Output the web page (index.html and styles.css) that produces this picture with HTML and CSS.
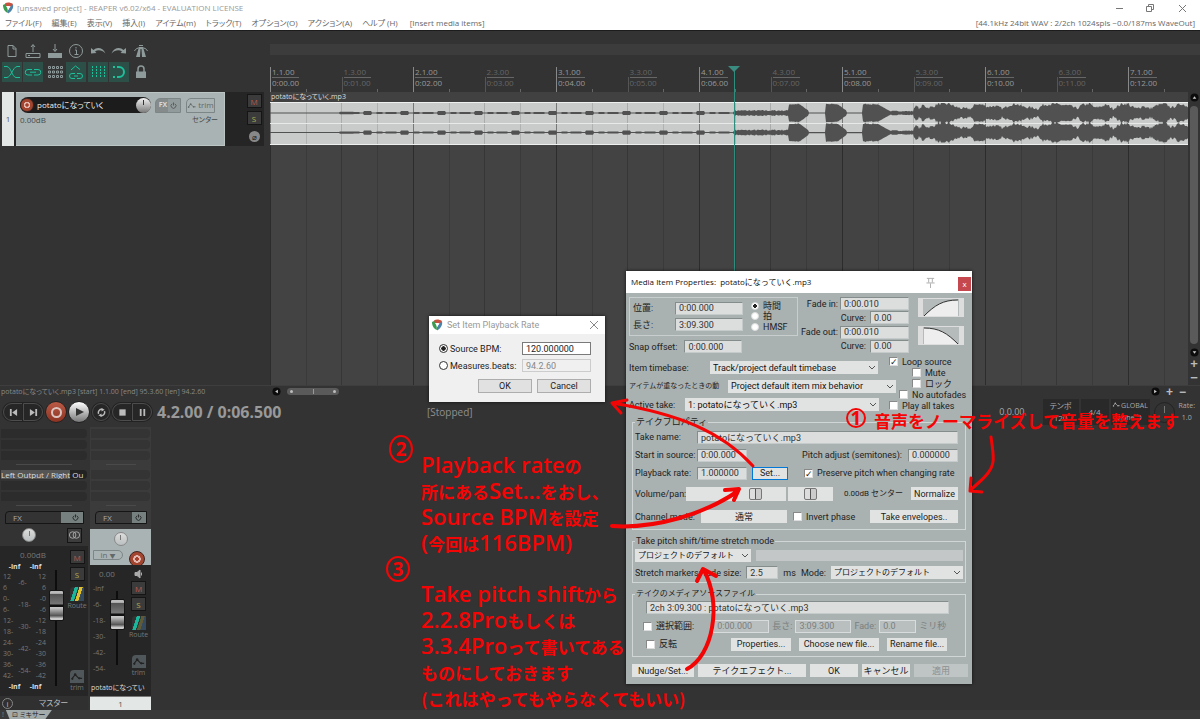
FILE: index.html
```html
<!DOCTYPE html>
<html lang="ja">
<head>
  <meta charset="UTF-8" />
  <meta name="viewport" content="width=device-width, initial-scale=1.0"/>
  <title>[unsaved project] - REAPER v6.02/x64 - EVALUATION LICENSE</title>
  <link rel="stylesheet" href="styles.css">
</head>
<body>
  <svg class="defs" width="0" height="0" aria-hidden="true">
    <defs>
      <symbol id="logo" viewBox="0 0 12 12">
        <path d="M1 3 L5 1 L6 11 C3 10 1 7 1 3Z" fill="#3b9b50"/>
        <path d="M3 1.5 C5 0 8 0 11 2 L10 5 L7 4 L4 4Z" fill="#c8523f"/>
        <path d="M11 2.5 C12 6 9 10 6 11.500 L6 8 L9 4Z" fill="#4b83a8"/>
        <path d="M4 4 L7.500 4 L6.500 8Z" fill="#fff"/>
      </symbol>
      <symbol id="trim" viewBox="0 0 15 13"><path d="M2 9 L5.500 4.500 L9.500 8.500 L13 8.500" fill="none" stroke="currentColor" stroke-width="1.200"/><circle cx="5.500" cy="4.500" r="1.400" fill="currentColor"/><circle cx="2.500" cy="9" r="1.200" fill="currentColor"/><circle cx="10" cy="8.500" r="1.200" fill="currentColor"/></symbol>
      <symbol id="power" viewBox="0 0 8 8"><path d="M2.500 2 A2.800 2.800 0 1 0 5.500 2 M4 .5 V4" fill="none" stroke="currentColor"/></symbol>
      <symbol id="up" viewBox="0 0 10 10"><circle cx="5" cy="5" r="4.500" fill="#0c0c0c"/><path d="M3 6.500 L5 3.500 L7 6.500Z" fill="#ccc"/></symbol>
    </defs>
  </svg>

  <header>
    <div class="titlebar">
      <svg class="logo"><use href="#logo"/></svg>
      <span class="title">[unsaved project] - REAPER v6.02/x64 - EVALUATION LICENSE</span>
      <svg class="winbuttons" viewBox="0 0 80 14" fill="none" stroke="#777"><path d="M4 7.500 H11 M34.500 5.500 h5 v5 h-5z M36.500 5.500 v-2 h5 v5 h-2 M67 4 l7 7 M74 4 l-7 7"/></svg>
    </div>
    <nav class="menubar">
      <a href="#">ファイル(F)</a><a href="#">編集(E)</a><a href="#">表示(V)</a><a href="#">挿入(I)</a><a href="#">アイテム(m)</a><a href="#">トラック(T)</a><a href="#">オプション(O)</a><a href="#">アクション(A)</a><a href="#">ヘルプ (H)</a>
      <span class="last-action">[Insert media items]</span>
      <span class="audio">[44.1kHz 24bit WAV : 2/2ch 1024spls ~0.0/187ms WaveOut]</span>
    </nav>
  </header>

  <main class="workspace">
    <section class="tcp">
      <div class="toolbar">
        <button aria-label="New"><svg viewBox="0 0 20 20"><path d="M6 4.500 H11 L14 7.500 V15.500 H6Z M11 4.500 V8 H14"/></svg></button>
        <button aria-label="Open"><svg viewBox="0 0 20 20"><path d="M3 12.500 H17 V16.500 H3Z M10 11 V4 M8 6 L10 3.500 L12 6 M5 14.500 H7"/></svg></button>
        <button aria-label="Save"><svg viewBox="0 0 20 20"><path d="M10 3 V10 M8 8 L10 10.500 L12 8"/><path class="solid" d="M3 12 H17 V17 H3Z"/></svg></button>
        <button aria-label="Info"><svg viewBox="0 0 20 20"><circle cx="10" cy="10" r="6.500"/><path d="M9 9 H10.500 V13.500 M8.500 13.500 H12.500 M10 6 V7.500"/></svg></button>
        <button aria-label="Undo"><svg viewBox="0 0 20 20"><path class="solid" d="M3 7 V12.500 L8.500 12 L7 10.500 C10 8.500 14 9 17.500 12.500 C15 6.500 9 5.500 5.500 9Z"/></svg></button>
        <button aria-label="Redo"><svg viewBox="0 0 20 20"><path class="solid" d="M17 7 V12.500 L11.500 12 L13 10.500 C10 8.500 6 9 2.500 12.500 C5 6.500 11 5.500 14.500 9Z"/></svg></button>
        <button aria-label="Metronome"><svg viewBox="0 0 20 20"><path class="solid" d="M8 6 H12 L15 16 H11 L10.500 8 H9.500 L9 16 H5Z"/><path d="M3.500 10 C5 5.500 15 5.500 16.500 10 M8 4.500 H12"/></svg></button>
        <button class="on" aria-label="Crossfade"><svg viewBox="0 0 20 20"><path d="M2 4.500 H5 C9 5 10 15 14 15.500 H18 M18 4.500 H15 C11 5 9 15 5 15.500 H2"/></svg></button>
        <button class="on" aria-label="Group"><svg viewBox="0 0 20 20"><path d="M9 7.500 H5 A2.500 2.500 0 0 0 5 13 H9 M11 7.500 H15 A2.500 2.500 0 0 1 15 13 H11 M7 10.200 H13"/></svg></button>
        <button aria-label="Ripple"><svg viewBox="0 0 20 20"><path d="M3.500 4.500h2v2h-2z M7.500 4.500h2v2h-2z M11.500 4.500h2v2h-2z M15.500 4.500h2v2h-2z M3.500 9h2v2h-2z M7.500 9h2v2h-2z M11.500 9h2v2h-2z M15.500 9h2v2h-2z M3.500 13.500h2v2h-2z M7.500 13.500h2v2h-2z M11.500 13.500h2v2h-2z M15.500 13.500h2v2h-2z"/></svg></button>
        <button class="on" aria-label="Envelope"><svg viewBox="0 0 20 20"><path d="M5 8 L9.500 4 L14 7.500 M9 11.500 H6 A2 2 0 0 0 6 16.500 H9 M11 11.500 H14 A2 2 0 0 1 14 16.500 H11 M8 14 H12"/></svg></button>
        <button class="on" aria-label="Grid"><svg viewBox="0 0 20 20"><path stroke-dasharray="2 1" d="M4.500 4 V16 M8.500 4 V16 M12.500 4 V16 M16.500 4 V16"/></svg></button>
        <button class="on" aria-label="Snap"><svg viewBox="0 0 20 20"><path stroke-width="2" d="M8 5 H10 A5 5 0 0 1 10 15 H8 M4 5 H6 M4 15 H6"/></svg></button>
        <button aria-label="Lock"><svg viewBox="0 0 20 20"><path stroke-width="1.500" d="M7 10 V7 A3 3 0 0 1 13 7 V10"/><path class="solid" d="M5 9.500 H15 V16 H5Z"/></svg></button>
      </div>

      <div class="track">
        <div class="track-no">1</div>
        <div class="track-body">
          <div class="track-row">
            <div class="name-pill"><i class="rec"></i><span>potatoになっていく</span><i class="knob"></i></div>
            <button class="fx-mini"><span>FX</span><svg><use href="#power"/></svg></button>
            <button class="trim-mini"><svg><use href="#trim"/></svg>trim</button>
          </div>
          <div class="track-row info"><span>0.00dB</span><span class="pan-label">センター</span></div>
        </div>
        <div class="track-side">
          <button class="ms mute">M</button>
          <button class="ms solo">S</button>
          <button class="phase" aria-label="Phase">⌀</button>
        </div>
      </div>
    </section>

    <section class="arrange">
      <div class="overview"></div>
      <div class="ruler" id="ruler"></div>
      <div class="lanes">
        <div class="item-name">potatoになっていく.mp3</div>
        <div class="item">
          <svg viewBox="0 0 918 43" preserveAspectRatio="none"><path id="wave" fill="#515151"/></svg>
        </div>
        <div class="cursor"></div>
      </div>
    </section>

    <aside class="vscroll">
      <svg><use href="#up"/></svg>
      <div class="thumb"></div>
      <svg class="down"><use href="#up"/></svg>
      <span>+</span><span>−</span>
    </aside>
  </main>

  <div class="statusline">
    <span class="status-text">potatoになっていく.mp3 [start] 1.1.00 [end] 95.3.60 [len] 94.2.60</span>
    <div class="hscroll">
      <svg class="left"><use href="#up"/></svg><div class="hthumb"><i></i><b></b><i></i></div>
      <svg class="right"><use href="#up"/></svg><span>+</span><span>−</span>
    </div>
  </div>

  <section class="transport">
    <div class="tbuttons">
      <button class="tb first" aria-label="Start"><svg viewBox="0 0 10 10"><path d="M1 1h2v8H1z M9 1v8L3.500 5z"/></svg></button>
      <button class="tb last" aria-label="End"><svg viewBox="0 0 10 10"><path d="M7 1h2v8H7z M1 1v8L6.500 5z"/></svg></button>
      <button class="round record" aria-label="Record"><i></i></button>
      <button class="round play" aria-label="Play"><svg viewBox="0 0 10 10"><path d="M2 1v8L10 5z"/></svg></button>
      <button class="tb loop" aria-label="Repeat"><svg viewBox="0 0 10 10"><path d="M1.800 6.500A3.600 3.600 0 0 1 6 1.600M8.200 3.500A3.600 3.600 0 0 1 4 8.400" fill="none" stroke="#bbb" stroke-width="1.600"/><path d="M5 0l3.500 2L5 4z M5 10L1.500 8 5 6z"/></svg></button>
      <button class="tb first" aria-label="Stop"><svg viewBox="0 0 10 10"><path d="M1.500 1.500h7v7h-7z"/></svg></button>
      <button class="tb last" aria-label="Pause"><svg viewBox="0 0 10 10"><path d="M2 1h2v8H2z M6 1h2v8H6z"/></svg></button>
    </div>
    <span class="time">4.2.00 / 0:06.500</span>
    <span class="state">[Stopped]</span>
    <div class="tright">
      <span class="sel">0.0.00</span>
      <div class="tbox">テンポ<br>120</div>
      <div class="tbox sig">4/4</div>
      <div class="tbox global"><span><svg><use href="#trim"/></svg>GLOBAL</span><span>none ⮌</span></div>
      <i class="ring"></i>
      <span class="rate">Rate:<br>1.0</span>
    </div>
  </section>

  <section class="mixer">
    <div class="strip master">
      <div class="slots"><i></i><i></i><i></i><hr><i class="out"><span>Left Output / Right</span> Ou</i><i></i><i></i><hr></div>
      <button class="fx"><span>FX</span><svg><use href="#power"/></svg></button>
      <div class="panrow"><i class="knob light"></i><button class="mono" aria-label="Mono"><svg viewBox="0 0 14 10"><circle cx="5" cy="5" r="3.500"/><circle cx="9" cy="5" r="3.500"/></svg></button></div>
      <div class="panel">
        <div class="meter">
          <div class="db">0.00dB</div>
          <div class="inf"><b>-inf</b><b>-inf</b></div>
          <div class="scales">
            <ol><li>12</li><li>6</li><li>0-</li><li>6-</li><li>12-</li><li>18-</li><li>24-</li><li>30-</li><li>36-</li><li>42-</li></ol>
            <ol class="mid"><li>-6-</li><li>-18-</li><li>-30-</li><li>-42-</li><li>-54-</li></ol>
            <ol><li>12</li><li>6</li><li>-0</li><li>-6</li><li>-12</li><li>-18</li><li>-24</li><li>-30</li><li>-36</li><li>-42</li></ol>
          </div>
          <div class="inf"><b>-inf</b><b>-inf</b></div>
        </div>
        <div class="fader"><i></i></div>
        <div class="side">
          <button class="ms mute">M</button><button class="ms solo">S</button>
          <button class="route"><i></i>Route</button>
          <button class="trim"><svg><use href="#trim"/></svg>trim</button>
        </div>
      </div>
      <div class="strip-foot"><span class="info-dot">i</span><span>マスター</span></div>
    </div>

    <div class="strip chan">
      <div class="slots"><i></i><i></i><i></i><hr><i></i><i></i><i></i><hr></div>
      <button class="fx"><span>FX</span><svg><use href="#power"/></svg></button>
      <div class="chan-top"><i class="knob light"></i><div><button class="in">in <small>▼</small></button><i class="rec"></i></div></div>
      <div class="panel">
        <div class="meter">
          <div class="db">0.00</div>
          <ol class="mid"><li>-inf</li><li>-6-</li><li>-18-</li><li>-30-</li><li>-42-</li><li>-54-</li></ol>
        </div>
        <div class="fader"><i></i></div>
        <div class="side">
          <svg class="speaker" viewBox="0 0 10 10"><path d="M1 3.500h2L6 1v8L3 6.500H1z M7.500 3.500v3" fill="#aaa" stroke="#aaa"/></svg>
          <button class="ms mute">M</button><button class="ms solo">S</button>
          <button class="route dim"><i></i>Route</button>
          <button class="trim"><svg><use href="#trim"/></svg>trim</button>
        </div>
      </div>
      <div class="chan-name">potatoになってい</div>
      <div class="chan-no">1</div>
    </div>
  </section>

  <footer class="docker"><span>!</span><a href="#" class="tab">⊡ ミキサー</a></footer>

  <form class="window rate-window">
    <div class="caption"><svg class="logo"><use href="#logo"/></svg><span>Set Item Playback Rate</span><button type="button" class="close" aria-label="Close"><svg viewBox="0 0 8 8"><path d="M0 0l8 8M8 0L0 8" stroke="#888"/></svg></button></div>
    <div class="rate-body">
      <label><input type="radio" name="mode" checked> Source BPM:</label>
      <input type="text" aria-label="Source BPM" value="120.000000">
      <label><input type="radio" name="mode"> Measures.beats:</label>
      <input type="text" aria-label="Measures.beats" value="94.2.60" disabled>
      <div class="rate-actions"><button type="button">OK</button><button type="button">Cancel</button></div>
    </div>
  </form>

  <form class="window props">
    <div class="caption"><span>Media Item Properties:&nbsp; potatoになっていく.mp3</span>
      <svg class="pin" viewBox="0 0 12 12"><path d="M2 1.500H10 M4 1.500V6 M8 1.500V6 M1.500 6.500H10.500 M6 7V12" fill="none" stroke="#aaa"/></svg>
      <button type="button" class="close" aria-label="Close">x</button></div>
    <div class="props-body">
      <div class="top">
        <div class="top-left">
          <div class="posbox">
            <div class="pairs">
              <label for="pos">位置:</label><input id="pos" type="text" value="0:00.000">
              <label for="len">長さ:</label><input id="len" type="text" value="3:09.300">
            </div>
            <div class="units">
              <label><input type="radio" name="unit" checked>時間</label>
              <label><input type="radio" name="unit">拍</label>
              <label><input type="radio" name="unit">HMSF</label>
            </div>
          </div>
          <div class="snap"><label for="snap">Snap offset:</label><input id="snap" type="text" value="0:00.000"></div>
        </div>
        <div class="fades">
          <label for="fi">Fade in:</label><input id="fi" type="text" value="0:00.010">
          <label class="curve" for="c1">Curve:</label><input class="short" id="c1" type="text" value="0.00">
          <label for="fo">Fade out:</label><input id="fo" type="text" value="0:00.010">
          <label class="curve" for="c2">Curve:</label><input class="short" id="c2" type="text" value="0.00">
        </div>
        <div class="shapes">
          <button type="button" aria-label="Fade in shape"><svg viewBox="0 0 36 17"><path d="M1 17C12 6 20 1 35 1V17z" fill="#eee"/><path d="M1 17C12 6 20 1 35 1" fill="none" stroke="#333"/></svg></button>
          <button type="button" aria-label="Fade out shape"><svg viewBox="0 0 36 17"><path d="M1 1C16 1 24 6 35 17H1z" fill="#eee"/><path d="M1 1C16 1 24 6 35 17" fill="none" stroke="#333"/></svg></button>
        </div>
      </div>

      <div class="middle">
        <div class="combos">
          <div><label for="tb">Item timebase:</label><select id="tb"><option>Track/project default timebase</option></select></div>
          <div class="mix"><label for="mix">アイテムが重なったときの動</label><select id="mix"><option>Project default item mix behavior</option></select></div>
          <div class="take"><label for="take">Active take:</label><select id="take"><option>1: potatoになっていく.mp3</option></select></div>
        </div>
        <div class="flags">
          <label><input type="checkbox" checked>Loop source</label>
          <label class="in2"><input type="checkbox">Mute</label>
          <label class="in2"><input type="checkbox">ロック</label>
          <label class="in1"><input type="checkbox">No autofades</label>
          <label><input type="checkbox">Play all takes</label>
        </div>
      </div>

      <fieldset class="takeprops">
        <legend>テイクプロパティ</legend>
        <div class="row"><label for="tn">Take name:</label><input class="grow" id="tn" type="text" value="potatoになっていく.mp3"></div>
        <div class="row"><label for="st">Start in source:</label><input id="st" type="text" value="0:00.000"><label class="pitch" for="pa">Pitch adjust (semitones):</label><input id="pa" type="text" value="0.000000"></div>
        <div class="row"><label for="pr">Playback rate:</label><input id="pr" type="text" value="1.000000"><button type="button" class="set">Set...</button><label class="preserve"><input type="checkbox" checked>Preserve pitch when changing rate</label></div>
        <div class="row volume"><label for="vol">Volume/pan:</label><input id="vol" type="range" value="72"><input class="pan" aria-label="Pan" type="range" value="50"><span>0.00dB センター</span><button type="button">Normalize</button></div>
        <div class="row channel"><span class="lab">Channel mode:</span><button type="button" class="mode">通常</button><label><input type="checkbox">Invert phase</label><button type="button" class="env">Take envelopes..</button></div>
      </fieldset>

      <fieldset class="stretch">
        <legend>Take pitch shift/time stretch mode</legend>
        <div class="row"><select class="half" aria-label="Pitch shift mode"><option>プロジェクトのデフォルト</option></select><div class="blank"></div></div>
        <div class="row"><label for="fs">Stretch markers: fade size:</label><input class="short" id="fs" type="text" value="2.5"><span>ms</span><label for="sm">Mode:</label><select class="grow" id="sm"><option>プロジェクトのデフォルト</option></select></div>
      </fieldset>

      <fieldset class="media">
        <legend>テイクのメディアソースファイル</legend>
        <input class="path" type="text" aria-label="Source" value="2ch 3:09.300 : potatoになっていく.mp3" readonly>
        <div class="row section"><label><input type="checkbox">選択範囲:</label><input class="from" type="text" aria-label="Start" value="0:00.000" disabled><span>長さ:</span><input type="text" aria-label="Length" value="3:09.300" disabled><span>Fade:</span><input class="short" type="text" aria-label="Fade" value="0.0" disabled><span>ミリ秒</span></div>
        <div class="row files"><label><input type="checkbox">反転</label><button type="button">Properties...</button><button type="button" class="wide">Choose new file...</button><button type="button">Rename file...</button></div>
      </fieldset>

      <div class="actions"><button type="button">Nudge/Set...</button><button type="button">テイクエフェクト...</button><button type="button">OK</button><button type="button">キャンセル</button><button type="button" disabled>適用</button></div>
    </div>
  </form>

  <div class="note note1">音声をノーマライズして音量を整えます</div>
  <div class="note note2"><b>Playback rate</b>の<br>所にある<b>Set...</b>をおし、<br><b>Source BPM</b>を設定<br><b>(</b>今回は<b>116BPM)</b></div>
  <div class="note note3"><b>Take pitch shift</b>から<br><b>2.2.8Pro</b>もしくは<br><b>3.3.4Pro</b>って書いてある<br>ものにしておきます<br>(これはやってもやらなくてもいい)</div>
  <svg class="arrows" width="1200" height="719" fill="none" stroke="#f40505" stroke-linecap="round" stroke-linejoin="round">
    <g stroke-width="3">
      <path d="M753 466C722 432 680 414 612 403M627 400L612 403L621 413"/>
      <path d="M991 437C994 458 995 464 988 473C982 481 976 484 970 491M971 478L970 491L982 492"/>
    </g>
    <path stroke-width="4" d="M612 526C655 529 705 514 738 491M725 490L739 489L734 500"/>
    <path stroke-width="4" d="M687 669C713 655 722 606 704 570M697 581L703 569L716 576"/>
    <g stroke-width="2">
      <ellipse cx="856" cy="418" rx="9" ry="9"/>
      <ellipse cx="401" cy="449" rx="11" ry="13"/>
      <ellipse cx="398" cy="569" rx="11" ry="12"/>
    </g>
    <g class="nums"><text x="856" y="425">1</text><text x="401" y="456">2</text><text x="398" y="576">3</text></g>
  </svg>

  <script src="script.js"></script>
</body>
</html>
```
FILE: styles.css
```css
* { box-sizing: border-box; }
body { margin: 0; min-height: 100vh; display: flex; flex-direction: column; position: relative; overflow: hidden; background: #333; color: #888; font: 8px/10px "Open Sans", "Noto Sans CJK JP", sans-serif; font-feature-settings: "palt"; }
button, input, select { font: inherit; font-feature-settings: inherit; color: inherit; margin: 0; padding: 0; border: 0; border-radius: 0; background: none; }
button { white-space: nowrap; }
a { color: inherit; text-decoration: none; }
i { font-style: normal; }
svg { display: block; }
.defs { position: absolute; }
.logo { width: 12px; height: 12px; flex: none; }

/* title and menu */
header { background: #fff; color: #666; border-bottom: 1px solid #1c1c1c; }
.titlebar { display: flex; align-items: center; gap: 3px; height: 16px; padding: 0 8px 0 2px; font-size: 8px; color: #999; }
.winbuttons { width: 80px; height: 14px; margin-left: auto; }
.menubar { display: flex; align-items: center; gap: 10px; height: 14px; padding: 0 5px; font-size: 8px; }
.last-action { margin-left: 2px; }
.audio { margin-left: auto; }

/* tracks and timeline */
.workspace { flex: 1; display: grid; grid-template-columns: 270px 1fr 12px; min-height: 0; }
.toolbar { display: grid; grid-template-columns: repeat(7, 1fr); row-gap: 1px; width: 150px; margin: 10px 0 10px 2px; }
.toolbar button { width: 20px; height: 20px; }
.toolbar svg { width: 20px; height: 20px; fill: none; stroke: #8f9a9a; }
.toolbar .solid { fill: #8f9a9a; stroke: none; }
.toolbar .on { background: #2c4f48; }
.toolbar .on svg { stroke: #1cc09a; }
.track { display: flex; width: 262px; height: 54px; margin-left: 2px; background: #252525; }
.track-no { width: 12px; background: #e3e7e5; color: #56606a; text-align: center; line-height: 54px; }
.track-body { width: 209px; margin-left: 2px; padding: 4px 6px 4px 4px; background: #aab3b3; border: 1px solid #bcc4c4; border-left: 0; color: #454b4b; }
.track-row { display: flex; align-items: center; gap: 4px; }
.info { justify-content: space-between; padding-top: 2px; }
.pan-label { font-size: 7px; }
.name-pill { display: flex; align-items: center; gap: 3px; width: 131px; height: 16px; border-radius: 8px; background: #1c1c1c; color: #eee; font-size: 8px; }
.name-pill .knob { margin-left: auto; }
.rec { width: 14px; height: 14px; flex: none; border: 1px solid #3c2420; border-radius: 50%; background: radial-gradient(circle, #a6412e 0 18%, #e3b8ae 20% 36%, #a3452f 40%); }
.knob { width: 15px; height: 15px; flex: none; border-radius: 50%; background: linear-gradient(#333, #333) 50% 2px / 1px 5px no-repeat, linear-gradient(#f2f2f2, #777); }
.knob.light { width: 14px; height: 14px; background: linear-gradient(#777, #777) 50% 2px / 1px 5px no-repeat, linear-gradient(#ddd, #bbc0c0); border: 1px solid #888; }
.fx-mini, .trim-mini { display: flex; align-items: center; justify-content: center; gap: 3px; height: 15px; border: 1px solid #7d8686; border-radius: 5px 0 0 0; }
.fx-mini { width: 26px; background: linear-gradient(90deg, #858b8b 50%, #929b9b 50%); color: #d5dada; font-weight: bold; font-size: 7px; }
.fx-mini svg { width: 7px; height: 7px; color: #555; }
.trim-mini { width: 29px; margin-left: 1px; gap: 1px; color: #626969; }
.trim-mini svg { width: 10px; height: 9px; }
.track-side { flex: 1; display: flex; flex-direction: column; align-items: center; gap: 3px; padding: 2px 0 0 19px; }
.ms { width: 15px; height: 14px; background: #3b3b3b; border: 1px solid #151515; line-height: 11px; font-size: 8px; }
.mute { color: #b35c50; }
.solo { color: #b0ac4d; }
.phase { width: 11px; height: 11px; margin-top: 3px; border-radius: 50%; background: #888; color: #222; line-height: 10px; }
.arrange { display: flex; flex-direction: column; min-width: 0; }
.overview { height: 11px; margin: 13px -12px 11px 0; background: #3c3c3c; }
.ruler { display: flex; height: 26px; overflow: hidden; color: #999; }
.bar { flex: 0 0 143px; display: grid; grid-template-columns: 1fr 1fr; background: linear-gradient(#666, #666) 36px 100% / 1px 3px no-repeat, linear-gradient(#666, #666) 107px 100% / 1px 3px no-repeat; }
.bar div { padding-left: 2px; background: linear-gradient(#888, #888) 0 100% / 1px 25px no-repeat; }
.bar div + div { background: linear-gradient(#555, #555) 0 100% / 1px 15px no-repeat; color: #666; }
.bar span { display: block; width: 27px; height: 12px; font-size: 8px; line-height: 12px; border-bottom: 1px solid #666; }
.bar small { display: block; font-size: 8px; line-height: 10px; }
.lanes, .item { background-image: linear-gradient(90deg, #2c2c2c 1px, transparent 1px), linear-gradient(90deg, #3a3a3a 1px, transparent 1px), linear-gradient(90deg, #363636 1px, transparent 1px), linear-gradient(90deg, #3a3a3a 1px, transparent 1px); background-size: 143px 100%; background-position: 0 0, 36px 0, 71px 0, 107px 0; }
.lanes { position: relative; flex: 1; background-color: #434343; }
.item-name { height: 10px; padding-left: 1px; color: #ddd; font-size: 7px; background: #414141; }
.item { height: 43px; border: 1px solid #eef0f0; border-width: 1px 0; background-color: #c9cbcb; background-image: linear-gradient(#e8eaea, #e8eaea), linear-gradient(90deg, #777 1px, transparent 1px), linear-gradient(90deg, #b0b2b2 1px, transparent 1px), linear-gradient(90deg, #aaacac 1px, transparent 1px), linear-gradient(90deg, #b0b2b2 1px, transparent 1px); background-size: 100% 1px, 143px 100%, 143px 100%, 143px 100%, 143px 100%; background-position: 0 20px, 0 0, 36px 0, 71px 0, 107px 0; background-repeat: no-repeat, repeat, repeat, repeat, repeat; }
.item svg { width: 100%; height: 41px; }
.cursor { position: absolute; left: 464px; top: -26px; bottom: 0; width: 1px; background: #2f8d7d; }
.cursor::before { content: ""; position: absolute; left: -6px; top: 0; border: 6px solid transparent; border-top-color: #3b8c80; border-bottom: 0; }
.vscroll { display: flex; flex-direction: column; align-items: center; padding-top: 62px; color: #bbb; font: bold 13px/14px "Liberation Sans", sans-serif; }
.vscroll svg { width: 9px; height: 9px; }
.vscroll .thumb { flex: 1; width: 8px; margin: 4px 0; border-radius: 4px; background: #5a5a5a; }
.down { transform: rotate(180deg); }
.statusline { display: grid; grid-template-columns: 265px 1fr; column-gap: 7px; align-items: center; height: 12px; border-top: 1px solid #3e3e3e; padding-right: 14px; }
.status-text { padding-left: 1px; white-space: nowrap; font-size: 7px; }
.hscroll { display: flex; align-items: center; color: #bbb; gap: 6px; font: bold 12px/10px "Liberation Sans", sans-serif; }
.hscroll svg { width: 9px; height: 9px; }
.left { transform: rotate(-90deg); }
.right { transform: rotate(90deg); margin-left: auto; }
.hthumb { display: flex; align-items: center; justify-content: space-between; width: 52px; height: 7px; padding: 0 3px; border-radius: 4px; background: #5a5a5a; }
.hthumb i { width: 3px; height: 3px; border-radius: 50%; background: #bbb; }
.hthumb b { width: 1px; height: 5px; background: #999; }

/* transport */
.transport { display: flex; align-items: center; height: 30px; padding: 0 5px 0 3px; }
.tbuttons { display: flex; align-items: center; width: 149px; }
.tb { display: grid; place-items: center; width: 20px; height: 18px; border: 1px solid #4d4d4d; background: #262626; box-shadow: 0 0 0 1px #222; }
.tb svg { width: 9px; height: 9px; fill: #bbb; }
.first { border-radius: 9px 0 0 9px; }
.last { border-radius: 0 9px 9px 0; }
.loop { width: 18px; margin: 0 2px; border-radius: 50%; }
.round { display: grid; place-items: center; width: 22px; height: 22px; flex: none; border-radius: 50%; border: 1px solid #222; margin-left: 1px; }
.record { margin-left: 2px; background: linear-gradient(#b95a45, #8d3323); }
.record i { width: 11px; height: 11px; border: 2px solid #dcc5c0; border-radius: 50%; }
.play { background: linear-gradient(#fff, #777); }
.play svg { width: 10px; height: 10px; fill: #333; }
.time { width: 275px; padding-left: 5px; font: bold 16px/18px "Noto Sans", sans-serif; color: #999; }
.state { font-size: 10px; color: #909090; }
.tright { display: flex; align-items: center; gap: 2px; margin-left: auto; text-align: center; color: #aaa; }
.sel { margin-right: 16px; font-size: 9px; }
.tbox { display: grid; align-content: center; width: 36px; height: 26px; background: #292929; line-height: 12px; }
.sig { width: 28px; }
.global { width: 39px; font-size: 7px; }
.global span { display: flex; justify-content: center; }
.global svg { width: 9px; height: 9px; }
.ring { width: 21px; height: 21px; margin: 0 2px; border: 1px solid #222; border-radius: 50%; background: linear-gradient(#777, #777) 50% 3px / 1px 7px no-repeat; }
.rate { font-size: 7px; line-height: 12px; }

/* mixer */
.mixer { display: flex; gap: 2px; height: 283px; }
.strip { display: flex; flex-direction: column; width: 88px; }
.chan { width: 61px; background: #3b3b3b; }
.slots { padding: 2px 1px 0; }
.slots i { display: block; height: 9px; margin-bottom: 2px; border-radius: 0 4px 4px 0; background: #2c2c2c; }
.chan .slots i { background: #343434; }
.slots hr { width: 30px; margin: 4px auto 5px; border: 0; border-top: 1px solid #4a4a4a; }
.slots .out { overflow: hidden; white-space: nowrap; font-size: 8px; line-height: 9px; color: #ddd; background: #222; }
.master hr { width: 56px; }
.out span { background: #555; }
.fx { display: flex; align-items: center; justify-content: space-between; height: 13px; margin: 0 4px 0 5px; padding: 0 4px 0 7px; border: 1px solid #151515; border-radius: 4px 0 0 0; background: linear-gradient(90deg, transparent 72%, #75807f 72%); color: #aaa; }
.fx svg { width: 7px; height: 7px; color: #222; }
.panrow { display: flex; align-items: center; justify-content: space-between; height: 22px; padding: 0 6px 0 22px; }
.mono { width: 15px; height: 15px; border: 1px solid #151515; background: #3d3d3d; }
.mono svg { width: 13px; height: 10px; fill: none; stroke: #aaa; }
.panel { flex: 1; display: flex; background: #262626; color: #777; }
.meter { width: 46px; padding-top: 4px; }
.db { padding-left: 20px; height: 12px; }
.inf { display: flex; justify-content: space-around; padding-left: 4px; height: 10px; color: #ddd; font-size: 7px; }
.scales { display: grid; grid-template-columns: repeat(3, 1fr); font-size: 7px; }
ol { display: grid; grid-auto-rows: 11px; margin: 0; padding: 0 0 0 3px; list-style: none; font-size: 7px; }
.scales ol:last-child { text-align: right; padding: 0; }
.mid { grid-auto-rows: 22px; line-height: 22px; }
.fader { width: 20px; margin: 24px 0 10px; display: flex; justify-content: center; background: linear-gradient(#0d0d0d, #0d0d0d) 50% 0 / 2px 100% no-repeat; }
.fader i { width: 15px; height: 31px; margin-top: 20px; border-radius: 2px; border: 1px solid #151515; background: linear-gradient(#bbb 0 8%, #555 12%, #777 45%, #111 48% 54%, #ccc 57%, #555 85%, #ccc 95%); }
.side { flex: 1; display: flex; flex-direction: column; align-items: center; gap: 3px; padding: 4px 0 3px; }
.route, .trim { display: grid; justify-items: center; width: 22px; color: #777; font-size: 7px; }
.route i { width: 14px; height: 14px; border-radius: 4px 0 0 0; background: linear-gradient(108deg, #333 25%, #19b79b 27% 44%, #333 46% 50%, #e0c12c 52% 68%, #354a5c 70%); }
.route.dim i { background: linear-gradient(108deg, #333 25%, #19b79b 27% 44%, #333 46% 50%, #5f5a38 52% 68%, #354a5c 70%); }
.route { margin-top: 3px; }
.trim { margin-top: auto; }
.trim svg { width: 14px; height: 13px; border-radius: 4px 0 0 0; background: #50575a; color: #222; }
.strip-foot { display: flex; align-items: center; gap: 26px; height: 14px; padding-left: 2px; background: #303030; color: #bbb; }
.info-dot { width: 11px; height: 11px; border: 1px solid #888; border-radius: 50%; text-align: center; line-height: 9px; }
.chan-top { height: 36px; margin-top: 5px; padding: 3px 3px 0; background: #aab3b3; }
.chan-top > .knob { display: block; margin: 0 auto; }
.chan-top div { display: flex; justify-content: space-between; }
.chan-top .rec { width: 16px; height: 16px; margin: 5px 3px -5px 0; }
.in { width: 30px; height: 10px; margin-top: 4px; border: 1px solid #7d8686; border-radius: 0 5px 5px 0; line-height: 8px; color: #626969; }
.in small { font-size: 6px; }
.chan .meter { width: 18px; }
.chan .db { padding-left: 9px; }
.chan .mid { grid-auto-rows: 16px; line-height: 16px; }
.chan .fader { width: 18px; margin: 26px 0 16px; }
.chan .fader i { margin-top: 8px; }
.chan .side { gap: 2px; }
.speaker { width: 10px; height: 10px; }
.chan-name { height: 15px; padding-left: 1px; overflow: hidden; white-space: nowrap; background: #262626; color: #ddd; font-size: 7px; line-height: 14px; }
.chan-no { height: 14px; border-top: 1px solid #777; background: #e3e7e5; color: #555; text-align: center; line-height: 13px; }
.docker { display: flex; gap: 2px; height: 9px; padding-left: 2px; background: #3a3a3a; overflow: hidden; font-size: 7px; line-height: 9px; }
.tab { width: 46px; padding-left: 6px; background: #a4abab; color: #222; clip-path: polygon(0 0, 100% 0, 86% 100%, 8% 100%); }

/* floating windows */
.window { position: absolute; color: #222; font: 9px/10px Roboto, "Noto Sans CJK JP", sans-serif; box-shadow: 0 0 3px #111; }
.caption { display: flex; align-items: center; background: #fff; }
.close { margin-left: auto; }
.window label, .window span { white-space: nowrap; }
.window input[type="text"] { min-width: 0; padding: 0 3px; }
.rate-window { left: 429px; top: 316px; width: 176px; background: #f0f0f0; }
.rate-window .caption { height: 18px; padding: 0 7px 0 2px; gap: 4px; color: #999; }
.rate-window .close svg { width: 8px; height: 8px; }
.rate-body { display: grid; grid-template-columns: 1fr 69px; row-gap: 4px; padding: 8px 14px 9px 10px; }
.rate-body label { display: flex; align-items: center; gap: 2px; }
.rate-body input[type="text"] { height: 13px; background: #fff; border: 1px solid #7a7a7a; }
.rate-body input[type="text"]:disabled { background: #f0f0f0; border-color: #ccc; color: #888; }
.rate-actions { grid-column: 1 / -1; display: flex; justify-content: flex-end; gap: 5px; padding-top: 3px; }
.rate-actions button { width: 54px; height: 14px; background: #e1e1e1; border: 1px solid #adadad; }
input[type="radio"] { appearance: none; width: 9px; height: 9px; flex: none; border: 1px solid #333; border-radius: 50%; background: #fff; }
input[type="radio"]:checked { background: radial-gradient(circle, #222 0 40%, #fff 50%); }
.props { left: 626px; top: 271px; width: 346px; background: #a9b1b1; }
.props .caption { height: 22px; padding-left: 5px; font: 8px/12px "Open Sans", "Noto Sans CJK JP", sans-serif; color: #111; }
.pin { width: 11px; height: 11px; margin-left: auto; }
.props .close { width: 13px; height: 14px; margin: 4px 1px 0 22px; background: #c4484d; color: #fff; line-height: 12px; }
.props-body { padding: 4px 4px 7px 3px; }
.props input[type="text"] { height: 13px; background: #dcdedd; border: 1px solid #858c8c; border-right-color: #c5caca; border-bottom-color: #c5caca; color: #333; }
.props input[type="text"]:disabled { background: #b9bfbf; border-color: #d9dcdc; color: #7a8080; }
.props button:not(.close) { height: 13px; background: #e1e3e3; }
.props .takeprops .set { width: 36px; margin-left: 5px; border: 1px solid #0078d7; line-height: 10px; }
.props button:disabled { background: #bfc4c4; color: #8b9191; }
.props input[type="radio"] { width: 8px; height: 8px; border-color: #ddd; }
.props label:has(input) { display: flex; align-items: center; gap: 4px; }
input[type="checkbox"] { appearance: none; display: grid; place-items: center; width: 9px; height: 9px; flex: none; background: #fff; border: 1px solid #888; border-right-color: #ddd; border-bottom-color: #ddd; }
input[type="checkbox"]:checked::before { content: "✓"; font: bold 9px/8px "DejaVu Sans", sans-serif; }
.props select { appearance: none; width: 168px; height: 13px; padding: 0 12px 0 3px; color: #111; background: linear-gradient(to top right, transparent 40%, #555 40% 60%, transparent 60%) calc(100% - 6px) 5px / 3px 3px no-repeat, linear-gradient(to top left, transparent 40%, #555 40% 60%, transparent 60%) calc(100% - 3px) 5px / 3px 3px no-repeat, #e1e3e3; }
.combos > div, .row { display: flex; align-items: center; }
.top { display: grid; grid-template-columns: 169px 1fr 46px; column-gap: 5px; padding-right: 4px; }
.posbox { display: grid; grid-template-columns: 1fr 46px; column-gap: 8px; height: 39px; padding: 3px 0 3px 3px; border: 1px solid #c8cdcd; }
.pairs { display: grid; grid-template-columns: 1fr 68px; row-gap: 2px; align-items: center; }
.units { display: grid; }
.units label { line-height: 10px; }
.snap { display: flex; align-items: center; gap: 7px; padding-top: 4px; }
.snap input { width: 58px; }
.fades { display: grid; grid-template-columns: 1fr 30px 39px; row-gap: 1px; align-items: center; margin-left: -4px; padding-right: 4px; text-align: right; }
.fades label { padding-right: 2px; }
.fades input:not(.short) { grid-column: span 2; }
.fades .curve { grid-column: span 2; padding-right: 4px; }
.shapes { display: grid; gap: 9px; align-content: start; padding-top: 1px; }
.props .shapes button { width: 46px; height: 19px; padding: 1px 5px; background: #ddd; }
.shapes svg { width: 36px; height: 17px; background: #b5baba; }
.middle { display: grid; grid-template-columns: 260px 1fr; padding-top: 3px; }
.combos { display: grid; grid-template-columns: 100%; align-content: space-between; padding: 5px 0 0; }
.combos label { flex: none; }
.combos div:first-child { justify-content: space-between; padding-right: 11px; }
.mix label { width: 99px; font-size: 7px; }
.mix select { flex: none; }
.take { justify-content: space-between; padding-right: 10px; }
.props .take select { width: 194px; }
.flags { display: grid; grid-auto-rows: 11px; position: relative; }
.flags .in2 { margin-left: 23px; }
.flags .in1 { margin-left: 10px; }
fieldset { min-width: 0; margin: 5px 2px 0 3px; padding: 0 2px 1px; border: 1px solid #d0d5d5; }
legend { height: 12px; padding: 0 1px; line-height: 12px; }
.takeprops .row { height: 18px; padding-right: 5px; }
.takeprops .row > label:first-child { width: 60px; }
.takeprops .row > label:first-child + input { margin-left: 2px; }
.takeprops .row > input { width: 50px; }
.takeprops .row > .grow { width: auto; flex: 1; }
.takeprops .pitch { margin: 0 0 0 auto; padding-right: 6px; }
.preserve { margin-left: 16px; }
.takeprops .volume, .takeprops .channel { height: 23px; }
.takeprops .volume > label:first-child { width: 51px; }
.takeprops .volume > #vol { width: 100px; margin-left: 0; }
.takeprops .volume > .pan { width: 45px; margin: 0 11px 0 2px; }
.volume span { font-size: 8px; }
.volume button { width: 47px; margin-left: auto; }
input[type="range"] { appearance: none; height: 14px; background: #e1e3e3; }
input[type="range"]::-webkit-slider-thumb { appearance: none; width: 13px; height: 12px; border: 1px solid #777; border-radius: 2px; background: linear-gradient(90deg, #ddd 45%, #555 45% 55%, #ccc 55%); }
.pan::-webkit-slider-thumb { width: 9px; }
.channel .lab { width: 66px; }
.channel .mode { width: 86px; margin-right: 6px; }
.channel .env { width: 88px; margin-left: auto; }
.stretch .row { height: 17px; gap: 5px; }
.stretch select { font-size: 8px; }
.props .stretch .half { width: 116px; }
.blank { flex: 1; height: 11px; background: #c4c7c7; }
.stretch .short { width: 32px; }
.props .grow { flex: 1; min-width: 0; }
.media { padding-bottom: 2px; }
.media legend { font-size: 8px; }
.props .path { display: block; width: 303px; margin: 1px 0 4px 11px; background: #a9b1b1; }
.section { gap: 3px; padding-left: 8px; color: #7a8080; height: 16px; }
.section label { color: #222; }
.section input[type="text"] { width: 56px; }
.section .from { margin-left: 16px; }
.section .short[type="text"] { width: 37px; }
.files { height: 20px; gap: 8px; padding: 0 16px 0 11px; }
.files label { margin-right: auto; }
.files button { width: 60px; }
.files .wide { width: 80px; }
.actions { display: grid; grid-template-columns: 62px 108px 48px 48px 1fr; gap: 4px; padding: 7px 0 0 3px; }

/* red pen notes */
.note { position: absolute; color: #f40505; white-space: nowrap; font: 700 17px/26px "Noto Sans CJK JP", sans-serif; }
.note b { font: 600 22px/20px "Open Sans", sans-serif; }
.note1 { left: 874px; top: 408px; }
.note2 { left: 421px; top: 453px; }
.note3 { left: 421px; top: 582px; }
.arrows { position: absolute; left: 0; top: 0; pointer-events: none; }
.nums { font: 700 19px "Open Sans", sans-serif; text-anchor: middle; fill: #f40505; stroke: none; }
```
FILE: script.js
```js
// ruler
const ruler = document.getElementById('ruler');
for (let i = 0; i < 7; i++) {
  const s = i * 2;
  const half = i < 6 ? `<div><span>${i + 1}.3.00</span><small>0:${String(s + 1).padStart(2, '0')}.00</small></div>` : '<div></div>';
  ruler.innerHTML += `<div class="bar"><div><span>${i + 1}.1.00</span><small>0:${String(s).padStart(2, '0')}.00</small></div>${half}</div>`;
}

// waveform: half height of one channel at each pixel
let seed = 7;
function rnd() { seed = (seed * 16807) % 2147483647; return seed / 2147483647; }
const bursts = [[519, 530, 539], [556, 568, 577], [593, 608, 620]];
const loud = [[643, 3], [645, 8], [650, 5], [653, 9], [658, 6], [663, 7], [668, 10], [680, 10], [685, 7], [693, 5], [700, 5],
  [703, 6], [705, 10], [713, 9], [718, 7], [725, 8], [733, 5], [740, 9], [747, 10], [753, 7], [763, 6], [768, 5], [773, 9],
  [783, 10], [800, 8], [807, 5], [812, 9], [820, 10], [825, 6], [837, 9], [843, 5], [852, 10], [857, 10], [862, 7], [867, 5],
  [873, 8], [880, 5], [888, 9], [895, 10], [902, 6], [908, 9], [912, 10], [918, 7]];
function amp(x) {
  if (x < 70) return 0.5;
  if (x < 84) return 1.2;
  if (x < 464) {
    const p = (x - 56) % 37;
    if (p >= 1 && p <= 8) return 2.2;
    return (p > 13 && p < 20) || (p > 22 && p < 34) ? 1.1 : 0.5;
  }
  if (x < 519) return 1.8 + rnd() * 1.5;
  for (const [a, b, c] of bursts) {
    if (x >= a && x < b) return 8.5 + rnd() * 1.5;
    if (x >= b && x < c) return 9 - 7 * (x - b) / (c - b);
  }
  if (x < 593) return 0.6;
  if (x < 643) return 1.5 + rnd();
  for (let i = 1; i < loud.length; i++) {
    const [x0, a0] = loud[i - 1], [x1, a1] = loud[i];
    if (x <= x1) return Math.min(10.4, a0 - 1 + (a1 - a0) * (x - x0) / (x1 - x0) + rnd() * 3 - 1);
  }
}
const amps = [];
for (let x = 0; x <= 918; x++) amps.push(amp(x));
let d = '';
for (const c of [10.5, 31]) {
  d += 'M0 ' + c + amps.map((a, x) => `L${x} ${(c - a).toFixed(1)}`).join('');
  d += amps.map((a, x) => `L${x} ${(c + a).toFixed(1)}`).reverse().join('') + 'Z';
}
document.getElementById('wave').setAttribute('d', d);
```
